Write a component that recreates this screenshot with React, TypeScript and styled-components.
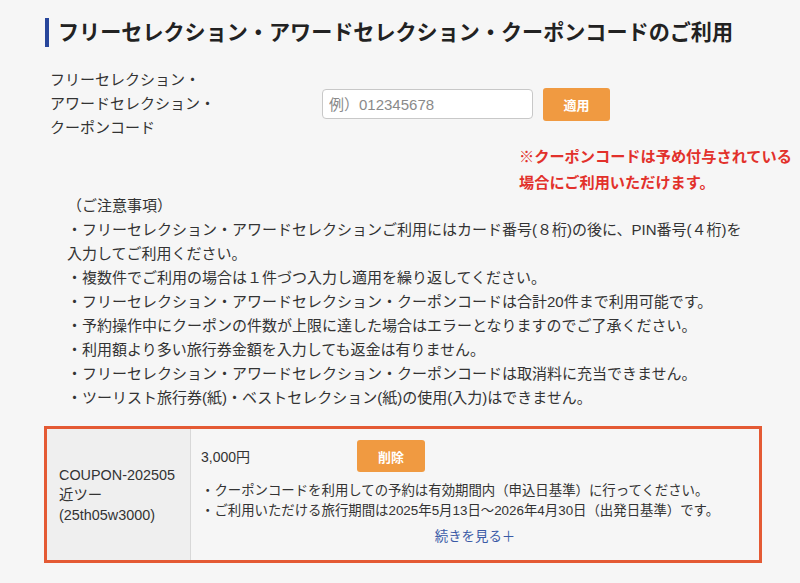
import styled, { createGlobalStyle } from "styled-components";

const GlobalStyle = createGlobalStyle`
    body {
        margin: 0;
        background-color: #f6f6f6;
        color: #333;
        font-family: "Liberation Sans", "Noto Sans CJK JP", sans-serif;
    }
`;

const Page = styled.div`
    padding: 18px 0 0 45px;
    width: 755px;
`;

const Heading = styled.h2`
    margin: 0;
    border-left: 4px solid #28469b;
    padding-left: 9px;
    font-size: 21.1px;
    line-height: 29px;
    font-weight: 700;
    color: #222;
    white-space: nowrap;
`;

const FormRow = styled.div`
    display: flex;
    align-items: center;
    margin-top: 21px;
    padding-left: 5px;
`;

const Label = styled.div`
    width: 272px;
    font-size: 15px;
    line-height: 24px;
`;

const CodeInput = styled.input`
    box-sizing: border-box;
    width: 211px;
    height: 30px;
    padding: 0 6px;
    border: 1px solid #c8c8c8;
    border-radius: 4px;
    background: #fff;
    font-family: inherit;
    font-size: 15px;
    color: #333;

    &::placeholder {
        color: #8a8a8a;
    }
`;

const OrangeButton = styled.button<{ $width: number; $height: number }>`
    width: ${(p) => p.$width}px;
    height: ${(p) => p.$height}px;
    border: none;
    border-radius: 3px;
    background-color: #f09a41;
    color: #fff;
    font-family: inherit;
    font-size: 13px;
    font-weight: 700;
    cursor: pointer;
    flex-shrink: 0;
`;

const ApplyButton = styled(OrangeButton)`
    margin-left: 10px;
`;

const Caution = styled.p`
    margin: 4px 0 0 474px;
    font-size: 15.2px;
    line-height: 26px;
    font-weight: 700;
    color: #e2312b;
    white-space: nowrap;
`;

const Notes = styled.div`
    margin: -2px 0 0 22px;
    width: 688px;
    font-size: 15px;
    line-height: 24px;
    color: #333;
`;

const NoteLine = styled.div``;

const CouponBox = styled.div`
    display: flex;
    margin: 16px 0 0 -1px;
    width: 718px;
    box-sizing: border-box;
    border: 3px solid #e45a34;
`;

const CouponName = styled.div`
    width: 144px;
    box-sizing: border-box;
    padding: 0 12px;
    display: flex;
    align-items: center;
    background-color: #efefef;
    border-right: 1px solid #d8d8d8;
    font-size: 14.4px;
    line-height: 20px;
    color: #333;
`;

const CouponBody = styled.div`
    flex: 1;
    padding: 11px 10px 13px;
`;

const PriceRow = styled.div`
    display: flex;
    align-items: center;
`;

const Price = styled.span`
    width: 156px;
    font-size: 14px;
`;

const Terms = styled.div`
    margin-top: 9px;
    font-size: 13.4px;
    line-height: 20px;
    white-space: nowrap;
`;

const MoreLink = styled.a`
    display: block;
    margin-top: 6px;
    text-align: center;
    font-size: 13.4px;
    line-height: 20px;
    color: #3a5aa6;
    text-decoration: none;
    cursor: pointer;
`;

const notes = [
    "・フリーセレクション・アワードセレクションご利用にはカード番号(８桁)の後に、PIN番号(４桁)を入力してご利用ください。",
    "・複数件でご利用の場合は１件づつ入力し適用を繰り返してください。",
    "・フリーセレクション・アワードセレクション・クーポンコードは合計20件まで利用可能です。",
    "・予約操作中にクーポンの件数が上限に達した場合はエラーとなりますのでご了承ください。",
    "・利用額より多い旅行券金額を入力しても返金は有りません。",
    "・フリーセレクション・アワードセレクション・クーポンコードは取消料に充当できません。",
    "・ツーリスト旅行券(紙)・ベストセレクション(紙)の使用(入力)はできません。",
];

export default function App() {
    return (
        <>
            <GlobalStyle />
            <Page>
                <Heading>フリーセレクション・アワードセレクション・クーポンコードのご利用</Heading>
                <FormRow>
                    <Label>
                        フリーセレクション・
                        <br />
                        アワードセレクション・
                        <br />
                        クーポンコード
                    </Label>
                    <CodeInput placeholder="例）012345678" />
                    <ApplyButton $width={67} $height={33}>適用</ApplyButton>
                </FormRow>
                <Caution>
                    ※クーポンコードは予め付与されている
                    <br />
                    場合にご利用いただけます。
                </Caution>
                <Notes>
                    <NoteLine>（ご注意事項）</NoteLine>
                    {notes.map((n) => (
                        <NoteLine key={n}>{n}</NoteLine>
                    ))}
                </Notes>
                <CouponBox>
                    <CouponName>
                        <div>
                            COUPON-202505
                            <br />
                            近ツー
                            <br />
                            (25th05w3000)
                        </div>
                    </CouponName>
                    <CouponBody>
                        <PriceRow>
                            <Price>3,000円</Price>
                            <OrangeButton $width={68} $height={32}>削除</OrangeButton>
                        </PriceRow>
                        <Terms>
                            ・クーポンコードを利用しての予約は有効期間内（申込日基準）に行ってください。
                            <br />
                            ・ご利用いただける旅行期間は2025年5月13日〜2026年4月30日（出発日基準）です。
                        </Terms>
                        <MoreLink>続きを見る＋</MoreLink>
                    </CouponBody>
                </CouponBox>
            </Page>
        </>
    );
}
